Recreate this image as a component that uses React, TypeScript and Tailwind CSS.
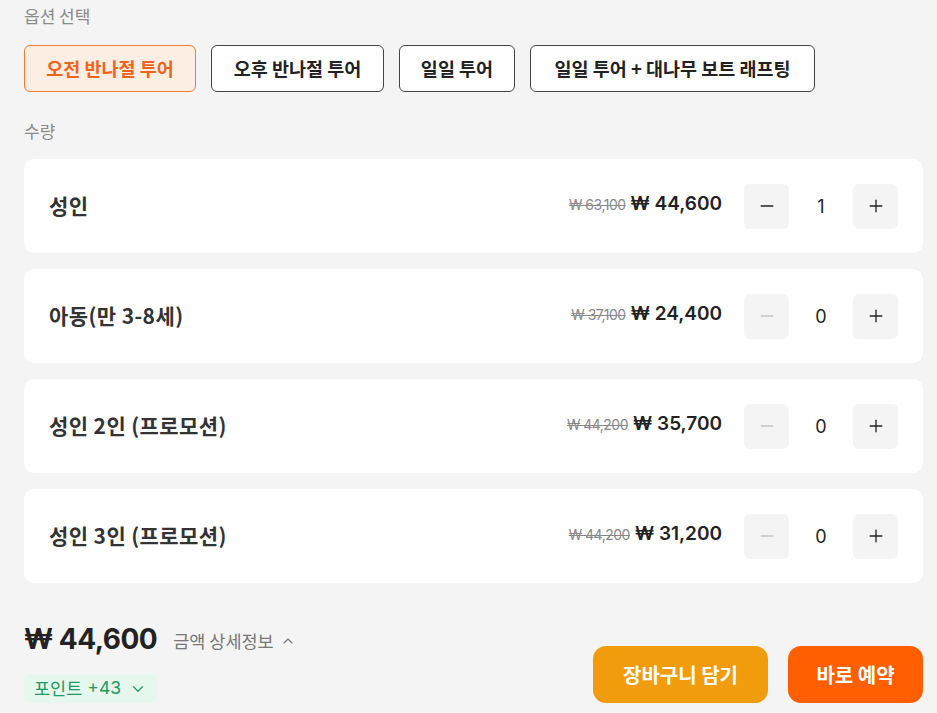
import { Minus, Plus, ChevronUp, ChevronDown } from "lucide-react";

const options = [
  { text: "오전 반나절 투어", w: "w-[172px]" },
  { text: "오후 반나절 투어", w: "w-[173px]" },
  { text: "일일 투어", w: "w-[116px]" },
  { text: "일일 투어 + 대나무 보트 래프팅", w: "w-[285px]" },
];

const rows = [
  { label: "성인", old: "₩ 63,100", price: "₩ 44,600", qty: 1 },
  { label: "아동(만 3-8세)", old: "₩ 37,100", price: "₩ 24,400", qty: 0 },
  { label: "성인 2인 (프로모션)", old: "₩ 44,200", price: "₩ 35,700", qty: 0 },
  { label: "성인 3인 (프로모션)", old: "₩ 44,200", price: "₩ 31,200", qty: 0 },
];

const kr = "font-['Noto_Sans_CJK_KR',sans-serif]";
const num = "font-['Inter','Noto_Sans_CJK_KR',sans-serif]";

export default function App() {
  return (
    <main className={`h-[713px] w-[937px] bg-[#f4f4f4] pl-6 pr-[14px] text-[#222] ${kr}`}>
      {/* OPTIONS */}
      <p className="pt-[3px] text-[17px] leading-[26px] text-[#8a8a8a]">옵션 선택</p>
      <div className="mt-[16px] flex gap-[15px]">
        {options.map((o, i) => (
          <button
            key={o.text}
            className={
              i === 0
                ? `h-[47px] ${o.w} rounded-[6px] border border-[#f47a2c] bg-[#fdeee3] text-[18.5px] font-bold text-[#f2641a]`
                : `h-[47px] ${o.w} rounded-[6px] border border-[#444] bg-white text-[18.5px] font-bold text-[#222]`
            }
          >
            {o.text}
          </button>
        ))}
      </div>

      {/* QTY */}
      <p className="mt-[26px] text-[17px] leading-[26px] text-[#8a8a8a]">수량</p>
      <div className="mt-[15px] flex flex-col gap-[16px]">
        {rows.map((r) => (
          <div key={r.label} className="flex h-[94px] items-center rounded-[10px] bg-white pl-[25px] pr-[25px]">
            <span className="text-[21px] font-semibold tracking-[0.4px] text-[#333]">{r.label}</span>
            <div className="ml-auto flex items-center">
              <div className={`-mt-[4px] flex items-baseline gap-[5px] ${num}`}>
                <span className="text-[14px] tracking-[-0.5px] text-[#888] line-through">{r.old}</span>
                <span className="text-[19px] font-semibold text-[#222]">{r.price}</span>
              </div>
              <button className="ml-[22px] flex h-[45px] w-[45px] items-center justify-center rounded-[6px] bg-[#f4f4f4]">
                <Minus className={r.qty > 0 ? "h-[20px] w-[20px] text-[#222]" : "h-[20px] w-[20px] text-[#c4c4c4]"} strokeWidth={1.6} />
              </button>
              <span className={`w-[64px] text-center text-[18px] text-[#222] ${num}`}>{r.qty}</span>
              <button className="flex h-[45px] w-[45px] items-center justify-center rounded-[6px] bg-[#f4f4f4]">
                <Plus className="h-[20px] w-[20px] text-[#222]" strokeWidth={1.6} />
              </button>
            </div>
          </div>
        ))}
      </div>

      {/* FOOTER */}
      <div className="mt-[38px] flex items-end">
        <div className="flex flex-col">
          <div className="flex h-[36px] items-center">
            <span className={`text-[28px] font-bold tracking-[-0.5px] text-[#222] ${num}`}>₩ 44,600</span>
            <span className="ml-[16px] mt-[4px] flex items-center text-[17.5px] text-[#777]">
              금액 상세정보
              <ChevronUp className="ml-[6px] h-[16px] w-[16px]" strokeWidth={1.6} />
            </span>
          </div>
          <div className="mt-[17px] flex h-[29px] w-fit items-center rounded-[6px] bg-[#e6f7ee] px-[10px] text-[17.5px] text-[#229a63]">
            포인트 <span className={`ml-[5px] ${num}`}>+43</span>
            <ChevronDown className="ml-[8px] h-[18px] w-[18px]" strokeWidth={1.6} />
          </div>
        </div>
        <div className="ml-auto flex gap-[20px]">
          <button className="h-[57px] w-[175px] rounded-[13px] bg-[#f09c0c] text-[20px] font-bold text-white">장바구니 담기</button>
          <button className="h-[57px] w-[135px] rounded-[13px] bg-[#ff5f00] text-[20px] font-bold text-white">바로 예약</button>
        </div>
      </div>
    </main>
  );
}
